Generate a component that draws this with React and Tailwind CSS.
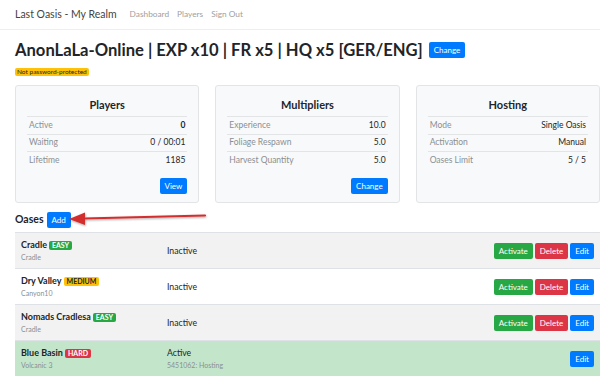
import React from 'react';

const players = [
  ['Active', '0', true],
  ['Waiting', '0 / 00:01'],
  ['Lifetime', '1185'],
];

const multipliers = [
  ['Experience', '10.0'],
  ['Foliage Respawn', '5.0'],
  ['Harvest Quantity', '5.0'],
];

const hosting = [
  ['Mode', 'Single Oasis'],
  ['Activation', 'Manual'],
  ['Oases Limit', '5 / 5'],
];

const oases = [
  { name: 'Cradle', map: 'Cradle', level: 'EASY', status: 'Inactive', bg: 'bg-[#f2f2f2]' },
  { name: 'Dry Valley', map: 'Canyon10', level: 'MEDIUM', status: 'Inactive', bg: 'bg-white' },
  { name: 'Nomads Cradlesa', map: 'Cradle', level: 'EASY', status: 'Inactive', bg: 'bg-[#f2f2f2]' },
  { name: 'Blue Basin', map: 'Volcanic 3', level: 'HARD', status: 'Active', note: '5451062: Hosting', bg: 'bg-[#c3e6cb]', active: true },
];

const levelClass = {
  EASY: 'bg-[#28a745] text-white',
  MEDIUM: 'bg-[#ffc107] text-[#212529]',
  HARD: 'bg-[#dc3545] text-white',
};

function Btn({ color, children, className = '' }) {
  return (
    <span className={`inline-flex items-center justify-center h-[16px] px-[5px] rounded-[2px] text-[8px] text-white leading-none ${color} ${className}`}>
      {children}
    </span>
  );
}

function InfoCard({ title, rows, button }) {
  return (
    <div className="flex-1 h-[118px] bg-[#f8f9fa] border border-[#e3e4e5] rounded-[3px] px-[11px] pt-[10px] flex flex-col">
      <div className="text-center text-[11px] font-bold text-[#212529] leading-[18px] mb-[2px]">{title}</div>
      <div className="border-t border-[#e3e4e5]">
        {rows.map(([label, value, bold], i) => (
          <div
            key={label}
            className={`flex justify-between items-center h-[17.5px] px-[2px] text-[8.5px] ${i < rows.length - 1 ? 'border-b border-[#e3e4e5]' : ''}`}
          >
            <span className="text-[#8a8f94]">{label}</span>
            <span className={bold ? 'font-bold text-[#212529]' : 'text-[#212529]'}>{value}</span>
          </div>
        ))}
      </div>
      {button && (
        <div className="flex justify-end mt-[8px]">
          <Btn color="bg-[#007bff]">{button}</Btn>
        </div>
      )}
    </div>
  );
}

export default function App() {
  return (
    <div className="w-[600px] h-[379px] overflow-hidden bg-white text-[#212529] relative" style={{ fontFamily: 'Lato, "Noto Sans", sans-serif' }}>
      {/* Navbar */}
      <div className="h-[30px] flex items-center pl-[15px] border-b border-[#eeeeee]">
        <span className="text-[10.5px] text-[#444]">Last Oasis - My Realm</span>
        <div className="flex gap-[8px] ml-[13px] text-[8.3px] text-[#a0a0a0]">
          <span>Dashboard</span>
          <span>Players</span>
          <span>Sign Out</span>
        </div>
      </div>

      <div className="pl-[15px]">
        {/* Title */}
        <div className="flex items-center mt-[11px] h-[18px]">
          <h1 className="text-[16.6px] font-bold leading-none text-[#212529]">AnonLaLa-Online | EXP x10 | FR x5 | HQ x5 [GER/ENG]</h1>
          <Btn color="bg-[#007bff]" className="ml-[6px] px-[5px]">Change</Btn>
        </div>
        <div className="mt-[9px] flex">
          <span className="bg-[#ffc107] text-[#212529] text-[6.5px] leading-[8px] px-[2px] rounded-[2px]">Not password-protected</span>
        </div>

        {/* Cards */}
        <div className="flex gap-[16px] mt-[9px]">
          <InfoCard title="Players" rows={players} button="View" />
          <InfoCard title="Multipliers" rows={multipliers} button="Change" />
          <InfoCard title="Hosting" rows={hosting} />
        </div>

        {/* Oases header */}
        <div className="flex items-center mt-[9px] h-[16px]">
          <span className="text-[10.5px] font-bold">Oases</span>
          <Btn color="bg-[#007bff]" className="ml-[3px] px-[5px]">Add</Btn>
        </div>

        {/* Table */}
        <div className="mt-[4px]">
          {oases.map((o) => (
            <div key={o.name} className={`flex items-center h-[36px] border-t border-[#dee2e6] ${o.bg}`}>
              <div className="w-[152px] pl-[6px]">
                <div className="flex items-center gap-[2px] text-[9px] font-bold leading-[12px]">
                  {o.name}
                  <span className={`text-[7px] font-bold px-[3px] leading-[9px] rounded-[2px] ${levelClass[o.level]}`}>{o.level}</span>
                </div>
                <div className="text-[7px] text-[#8a8f94] leading-[10px] mt-[1px]">{o.map}</div>
              </div>
              <div className="flex-1">
                <div className="text-[8.7px] leading-[12px]">{o.status}</div>
                {o.note && <div className="text-[7px] text-[#8a8f94] leading-[10px] mt-[1px]">{o.note}</div>}
              </div>
              <div className="flex gap-[2px] pr-[6px]">
                {!o.active && <Btn color="bg-[#28a745]">Activate</Btn>}
                {!o.active && <Btn color="bg-[#dc3545]">Delete</Btn>}
                <Btn color="bg-[#007bff]">Edit</Btn>
              </div>
            </div>
          ))}
        </div>
      </div>

      {/* Red annotation arrow */}
      <svg className="absolute left-[66px] top-[206px]" width="145" height="22" viewBox="0 0 145 22">
        <defs>
          <filter id="sh" x="-10%" y="-50%" width="120%" height="200%">
            <feDropShadow dx="0.5" dy="1" stdDeviation="0.8" floodColor="#000" floodOpacity="0.35" />
          </filter>
        </defs>
        <g filter="url(#sh)">
          <path d="M18 12.5 L139 9.5" stroke="#d32f2f" strokeWidth="2.2" strokeLinecap="round" fill="none" />
          <path d="M3 13 L19 6.5 L19 19 Z" fill="#d32f2f" />
        </g>
      </svg>
    </div>
  );
}
